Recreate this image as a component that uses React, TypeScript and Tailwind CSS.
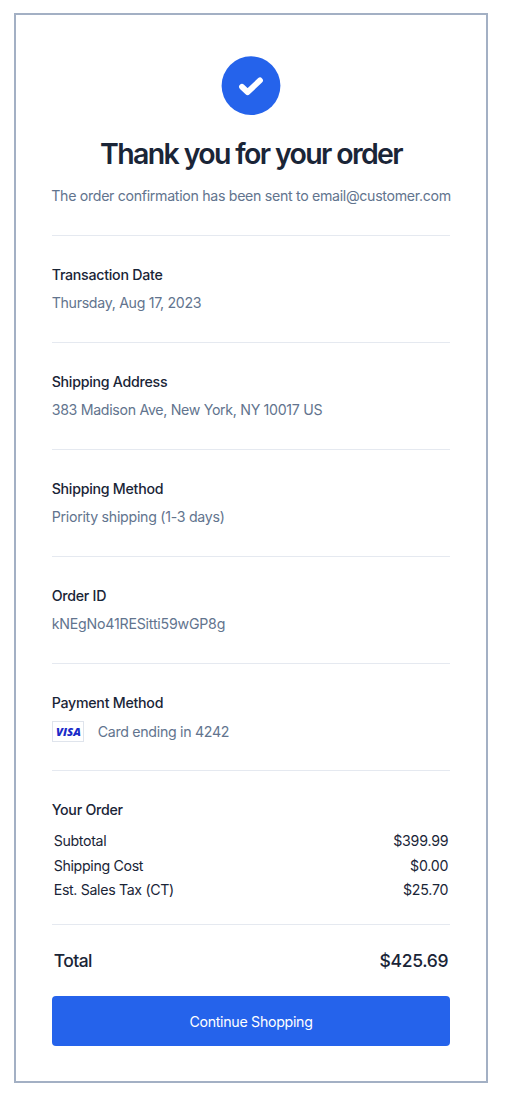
import { Fragment } from "react";

const details = [
  { label: "Transaction Date", value: "Thursday, Aug 17, 2023", tracking: "tracking-[-0.32px]" },
  {
    label: "Shipping Address",
    value: "383 Madison Ave, New York, NY 10017 US",
    tracking: "tracking-[-0.32px]",
  },
  { label: "Shipping Method", value: "Priority shipping (1-3 days)", tracking: "tracking-[-0.28px]" },
  { label: "Order ID", value: "kNEgNo41RESitti59wGP8g", tracking: "tracking-[-0.22px]" },
];

const costs = [
  { label: "Subtotal", value: "$399.99" },
  { label: "Shipping Cost", value: "$0.00" },
  { label: "Est. Sales Tax (CT)", value: "$25.70" },
];

function Divider() {
  return <hr className="h-px border-0 bg-[#e5e9f0]" />;
}

function VisaBadge() {
  return (
    <span className="flex h-[21px] w-8 items-center justify-center border border-[#dfe4ec] bg-white">
      <svg viewBox="0 0 30 18" className="h-[18px] w-[30px] overflow-visible">
        <text
          x="15.5"
          y="13"
          textAnchor="middle"
          textLength="25"
          lengthAdjust="spacingAndGlyphs"
          fontFamily="Open Sans, sans-serif"
          fontSize="11"
          fontWeight="800"
          fontStyle="italic"
          letterSpacing="0"
          fill="#1a2bc8"
        >
          VISA
        </text>
      </svg>
    </span>
  );
}

export default function App() {
  return (
    <div className="h-[1095px] bg-white pt-[13px] pl-[14px] font-['Inter',sans-serif] text-[14.2px] leading-5 tracking-[-0.3px] text-[#1a2537]">
      <main className="h-[1070px] w-[474px] border-2 border-[#a3b0c4] px-[35.7px] pt-[41px]">
        <header className="flex h-[179px] flex-col items-center">
          <svg viewBox="0 0 60 60" className="size-[60px] shrink-0">
            <circle cx="30" cy="29.7" r="29.4" fill="#2563eb" />
            <path
              d="M21 30.8l5.6 5.4L39 24.4"
              fill="none"
              stroke="white"
              strokeWidth="5.8"
              strokeLinecap="round"
              strokeLinejoin="round"
            />
          </svg>
          <h1 className="mt-5 text-[28.5px] leading-9 font-semibold tracking-[-1.65px] whitespace-nowrap">
            Thank you for your order
          </h1>
          <p className="mt-[14px] tracking-[-0.32px] whitespace-nowrap text-slate-500">
            The order confirmation has been sent to email@customer.com
          </p>
        </header>

        {details.map((item) => (
          <Fragment key={item.label}>
            <Divider />
            <section className="h-[106px] pt-[29px]">
              <h2 className="font-medium tracking-[-0.26px]">{item.label}</h2>
              <p className={`mt-2 text-slate-500 ${item.tracking}`}>{item.value}</p>
            </section>
          </Fragment>
        ))}

        <Divider />
        <section className="h-[106px] pt-[29px]">
          <h2 className="font-medium tracking-[-0.26px]">Payment Method</h2>
          <div className="mt-2 flex items-center gap-[14px] text-slate-500">
            <VisaBadge />
            <span>Card ending in 4242</span>
          </div>
        </section>

        <Divider />
        <section className="h-[153px] pt-[29px]">
          <h2 className="font-medium tracking-[-0.26px]">Your Order</h2>
          <dl className="mt-[9px] px-0.5">
            {costs.map((cost) => (
              <div key={cost.label} className="flex h-[24.5px] items-center justify-between">
                <dt className="tracking-[-0.34px]">{cost.label}</dt>
                <dd className="tracking-[-0.22px]">{cost.value}</dd>
              </div>
            ))}
          </dl>
        </section>

        <Divider />
        <div className="flex h-[71px] items-center justify-between px-0.5 text-[17.5px] font-medium">
          <span className="tracking-[-0.55px]">Total</span>
          <span>$425.69</span>
        </div>
        <button className="h-[50px] w-full rounded bg-[#2563eb] pt-0.5 text-white">Continue Shopping</button>
      </main>
    </div>
  );
}
